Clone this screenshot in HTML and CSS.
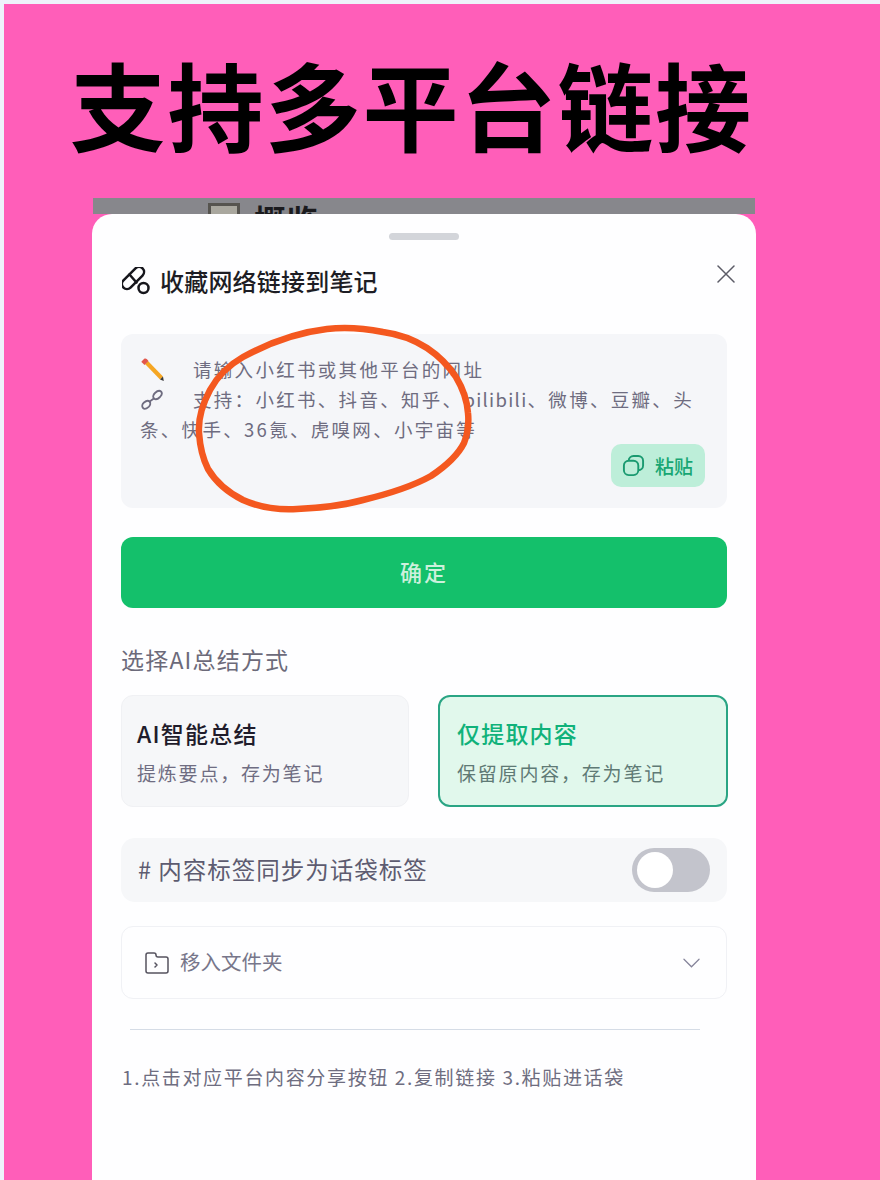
FILE: index.html
```html
<!DOCTYPE html>
<html lang="zh-CN">
<head>
  <meta charset="UTF-8">
  <title>支持多平台链接</title>
  <link rel="stylesheet" href="styles.css">
</head>
<body>
  <div class="poster">
    <h1 class="headline">支持多平台链接</h1>

    <div class="phone">
      <div class="peek">
        <span class="peek-icon"></span>
        <span class="peek-text">概览</span>
      </div>

      <div class="sheet">
        <div class="handle"></div>

        <div class="sheet-head">
          <svg class="head-icon" viewBox="0 0 28 28" fill="none" stroke="#16161c" stroke-width="2.500" stroke-linecap="round">
            <rect x="-2.500" y="6" width="27" height="10" rx="5" transform="rotate(-45 11 11)"/>
            <path d="M7.500 7.500l7 8"/>
            <circle cx="21.500" cy="21" r="5" fill="#fefeff"/>
          </svg>
          <span class="sheet-title">收藏网络链接到笔记</span>
          <svg class="close-icon" viewBox="0 0 18 18" fill="none" stroke="#5b5b66" stroke-width="1.500" stroke-linecap="round">
            <path d="M1 1l16 16M17 1L1 17"/>
          </svg>
        </div>

        <div class="input-box">
          <p class="hint">
            <svg class="hint-icon" viewBox="0 0 24 24">
              <path d="M5 6l3-3 15 15.500-3 3z" fill="#f5a623"/>
              <path d="M1.500 3.500L4 1c1-.8 2-.6 3 .3L8.500 3 4.500 7 2.500 5c-.8-.6-1.200-1-1-1.500z" fill="#e2574c"/>
              <path d="M20 21.500l3-3 .8 4.500z" fill="#3a3a3a"/>
            </svg>请输入小红书或其他平台的网址<br>
            <svg class="hint-icon" viewBox="0 0 24 24" fill="none" stroke="#6e6c80" stroke-width="1.800">
              <path d="M3 20c-1.500-1.800-.8-4 1-5.500 1.800-1.500 3.800-2.500 5.500-1 1.500 1.500.8 3.800-.8 5.300C6.800 20.500 4.500 21.500 3 20z"/>
              <path d="M14 10.500c-1.500-1.500-.8-3.800 1-5.500 1.800-1.700 4.200-3 6-1.500 1.500 1.500.6 3.800-1 5.500-1.800 1.800-4.300 3-6 1.500z"/>
              <path d="M9 14l5.500-4"/>
            </svg>支持：小红书、抖音、知乎、<span class="latin">bilibili</span>、微博、豆瓣、头<br>条、快手、36氪、虎嗅网、小宇宙等
          </p>
          <div class="paste">
            <svg class="paste-icon" viewBox="0 0 24 24" fill="none" stroke="#1a9a70" stroke-width="2">
              <rect x="7" y="2" width="15" height="15" rx="5"/>
              <rect x="2" y="7" width="15" height="15" rx="5" fill="#bdeed9"/>
            </svg>
            <span>粘贴</span>
          </div>
        </div>

        <div class="confirm">确定</div>

        <div class="section-label">选择AI总结方式</div>

        <div class="modes">
          <div class="mode">
            <div class="mode-title">AI智能总结</div>
            <div class="mode-sub">提炼要点，存为笔记</div>
          </div>
          <div class="mode mode-active">
            <div class="mode-title">仅提取内容</div>
            <div class="mode-sub">保留原内容，存为笔记</div>
          </div>
        </div>

        <div class="sync-row">
          <span class="row-text"># 内容标签同步为话袋标签</span>
          <span class="toggle"><span class="knob"></span></span>
        </div>

        <div class="folder-row">
          <svg class="folder-icon" viewBox="0 0 24 22" fill="none" stroke="#55535f" stroke-width="1.500" stroke-linejoin="round">
            <path d="M1 3c0-1.200.8-2 2-2h6c1.200 0 2 .8 2 2 0 1.500.8 2 2 2h8c1.200 0 2 .8 2 2v12c0 1.200-.8 2-2 2H3c-1.200 0-2-.8-2-2V3z"/>
            <path d="M10 11l2 2-2 2" stroke-linecap="round"/>
          </svg>
          <span class="row-text">移入文件夹</span>
          <svg class="chevron" viewBox="0 0 18 10" fill="none" stroke="#85849a" stroke-width="1.300" stroke-linecap="round">
            <path d="M1 1l8 8 8-8"/>
          </svg>
        </div>

        <div class="divider"></div>

        <p class="steps">1.点击对应平台内容分享按钮 2.复制链接 3.粘贴进话袋</p>
      </div>
    </div>

    <svg class="scribble" viewBox="0 0 290 200" fill="none" stroke="#f4581f" stroke-width="6.500" stroke-linecap="round">
      <path d="M134 6C100 10 72 22 50 34 36 42 24 54 17 67 10 80 5 95 6 110 7 124 10 136 15 146 24 161 36 170 50 177 68 185 86 187 104 186 128 185 148 183 170 177 195 171 220 163 238 153 253 143 265 132 271 120 275 110 276 100 275 90 274 76 269 64 263 54 255 42 246 33 234 25 220 16 205 11 190 9 170 5 150 4 134 6z"/>
    </svg>
  </div>
</body>
</html>
```

FILE: styles.css
```css
* {
  box-sizing: border-box;
}

html, body {
  margin: 0;
  height: 1180px;
  overflow: hidden;
  background-color: #eef3fb;
  font-family: "Noto Sans CJK SC", "Noto Sans", sans-serif;
}

p {
  margin: 0;
}

.poster {
  position: relative;
  height: 1176px;
  margin: 4px 0 0 4px;
  background-color: #ff5eb9;
  overflow: hidden;
}

.headline {
  margin: 0;
  height: 194px;
  padding: 29px 0 0 66px;
  font-size: 96px;
  line-height: 140px;
  letter-spacing: 1.500px;
  font-weight: 700;
  color: #000;
  white-space: nowrap;
}

.phone {
  width: 664px;
  margin-left: 88px;
}

.peek {
  display: flex;
  align-items: flex-start;
  gap: 14px;
  width: 662px;
  margin-left: 1px;
  height: 16px;
  padding: 5px 0 0 115px;
  background-color: #87878c;
  overflow: hidden;
}

.peek-icon {
  width: 32px;
  height: 30px;
  border: 3px solid #56544f;
  background-color: #a9a79e;
}

.peek-text {
  font-size: 32px;
  line-height: 32px;
  font-weight: 700;
  color: #1b1b1e;
}

.sheet {
  height: 980px;
  padding: 19px 29px 0;
  background-color: #fefeff;
  border-radius: 20px 20px 0 0;
}

.handle {
  width: 70px;
  height: 7px;
  margin: 0 auto;
  border-radius: 4px;
  background-color: #d3d5da;
}

.sheet-head {
  display: flex;
  align-items: center;
  height: 30px;
  margin: 26px 0 38px 1px;
}

.head-icon {
  width: 28px;
  height: 28px;
  margin-right: 10px;
}

.sheet-title {
  margin-top: -2px;
  font-size: 24px;
  letter-spacing: .2px;
  font-weight: 500;
  color: #1d1d24;
}

.close-icon {
  width: 18px;
  height: 18px;
  margin: -14px -8px 0 auto;
}

.input-box {
  display: flex;
  flex-direction: column;
  height: 174px;
  padding: 20px 22px 21px 19px;
  border-radius: 12px;
  background-color: #f5f6f9;
}

.hint {
  font-size: 18.500px;
  line-height: 30px;
  letter-spacing: 2.300px;
  color: #6e6c80;
}

.latin {
  letter-spacing: 1.300px;
}

.hint-icon {
  display: inline-block;
  width: 24px;
  height: 24px;
  margin-right: 29px;
  vertical-align: -5px;
}

.paste {
  display: flex;
  align-items: center;
  gap: 10px;
  margin: auto 0 0 auto;
  width: 94px;
  height: 43px;
  padding-left: 11px;
  border-radius: 10px;
  background-color: #bdeed9;
  font-size: 19px;
  font-weight: 500;
  color: #17a673;
}

.paste-icon {
  width: 23px;
  height: 23px;
}

.confirm {
  height: 71px;
  margin-top: 29px;
  border-radius: 12px;
  background-color: #14c06b;
  color: #cdf0dc;
  font-size: 22px;
  letter-spacing: 2px;
  font-weight: 500;
  line-height: 69px;
  text-align: center;
}

.section-label {
  margin-top: 34px;
  font-size: 23px;
  letter-spacing: 1.200px;
  line-height: 34px;
  color: #6c6a7a;
}

.modes {
  display: grid;
  grid-template-columns: 288px 290px;
  gap: 29px;
  margin-top: 19px;
}

.mode {
  height: 112px;
  padding: 19px 15px;
  border: 1px solid #f0f1f4;
  border-radius: 12px;
  background-color: #f6f7f9;
}

.mode-title {
  font-size: 23px;
  letter-spacing: 1.200px;
  line-height: 36px;
  font-weight: 500;
  color: #1f1c2b;
}

.mode-sub {
  margin-top: 7px;
  font-size: 19px;
  letter-spacing: 1.800px;
  line-height: 30px;
  color: #6f6d82;
}

.mode-active {
  border: 2px solid #2aa584;
  background-color: #e1f8ec;
  padding: 18px 17px;
}

.mode-active .mode-title {
  color: #10b27a;
}

.mode-active .mode-sub {
  color: #5f7a75;
}

.sync-row {
  display: flex;
  align-items: center;
  justify-content: space-between;
  height: 64px;
  margin-top: 31px;
  padding: 0 17px;
  border-radius: 14px;
  background-color: #f6f7f9;
  font-size: 23.500px;
  letter-spacing: 1px;
  color: #5d5b70;
}

.row-text {
  margin-top: -3px;
}

.toggle {
  display: flex;
  align-items: center;
  width: 78px;
  height: 44px;
  padding-left: 5px;
  border-radius: 22px;
  background-color: #c3c4cc;
}

.knob {
  width: 36px;
  height: 36px;
  border-radius: 50%;
  background-color: #fff;
}

.folder-row {
  display: flex;
  align-items: center;
  height: 73px;
  margin-top: 24px;
  padding: 0 26px 0 23px;
  border: 1px solid #f0f1f5;
  border-radius: 12px;
  font-size: 20.500px;
  color: #77768a;
}

.folder-icon {
  width: 24px;
  height: 22px;
  margin-right: 11px;
}

.chevron {
  width: 17px;
  height: 10px;
  margin-left: auto;
}

.divider {
  width: 570px;
  height: 1px;
  margin: 30px 0 0 9px;
  background-color: #d5dce6;
}

.steps {
  margin: 32px 0 0 1px;
  font-size: 19px;
  letter-spacing: 1.650px;
  line-height: 30px;
  color: #6e6d80;
  white-space: nowrap;
}

.scribble {
  position: absolute;
  left: 189px;
  top: 319px;
  width: 290px;
  height: 200px;
  overflow: visible;
}
```
